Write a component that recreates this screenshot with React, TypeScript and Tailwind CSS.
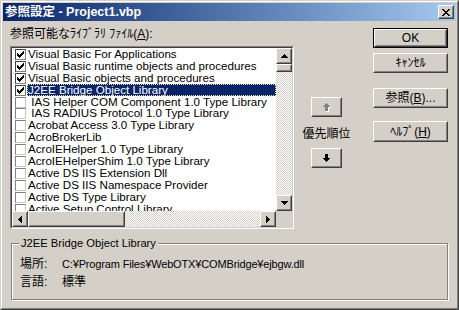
import React from "react";

type P = { className?: string; children?: React.ReactNode };

function Raised({ className = "", children }: P) {
  return (
    <div
      className={`shrink-0 border border-t-white border-l-white border-r-[#404040] border-b-[#404040] ${className}`}
    >
      <div className="w-full h-full border border-t-[#d4d0c8] border-l-[#d4d0c8] border-r-[#808080] border-b-[#808080] bg-[#d4d0c8] flex items-center justify-center">
        {children}
      </div>
    </div>
  );
}

function Btn({ children, def = false, className = "" }: P & { def?: boolean }) {
  if (def)
    return (
      <div className={`shrink-0 border border-black ${className}`}>
        <Raised className="w-full h-full">{children}</Raised>
      </div>
    );
  return <Raised className={className}>{children}</Raised>;
}

function Px({ w, h, rects, color }: { w: number; h: number; rects: number[][]; color: string }) {
  return (
    <svg width={w} height={h} viewBox={`0 0 ${w} ${h}`} shapeRendering="crispEdges" className="block">
      {rects.map(([x, y, rw, rh], i) => (
        <rect key={i} x={x} y={y} width={rw} height={rh} fill={color} />
      ))}
    </svg>
  );
}

const UP = [[3, 0, 1, 1], [2, 1, 3, 1], [1, 2, 5, 1], [0, 3, 7, 1]];
const DOWN = [[0, 0, 7, 1], [1, 1, 5, 1], [2, 2, 3, 1], [3, 3, 1, 1]];
const LEFT = [[0, 3, 1, 1], [1, 2, 1, 3], [2, 1, 1, 5], [3, 0, 1, 7]];
const RIGHT = [[0, 0, 1, 7], [1, 1, 1, 5], [2, 2, 1, 3], [3, 3, 1, 1]];
const CHECK = [[6, 0, 1, 1], [5, 1, 2, 1], [0, 2, 1, 1], [4, 2, 3, 1], [0, 3, 2, 1], [3, 3, 3, 1], [0, 4, 5, 1], [1, 5, 3, 1], [2, 6, 1, 1]];
const CLOSE = [[0, 0, 2, 1], [6, 0, 2, 1], [1, 1, 2, 1], [5, 1, 2, 1], [2, 2, 4, 1], [3, 3, 2, 1], [2, 4, 4, 1], [1, 5, 2, 1], [5, 5, 2, 1], [0, 6, 2, 1], [6, 6, 2, 1]];
const BIGDOWN = [[2, 0, 3, 4], [0, 4, 7, 1], [1, 5, 5, 1], [2, 6, 3, 1], [3, 7, 1, 1]];
const BIGUP = [[3, 0, 1, 1], [2, 1, 3, 1], [1, 2, 5, 1], [0, 3, 7, 1], [2, 4, 3, 4]];

const items: { t: string; c?: boolean; s?: boolean }[] = [
  { t: "Visual Basic For Applications", c: true },
  { t: "Visual Basic runtime objects and procedures", c: true },
  { t: "Visual Basic objects and procedures", c: true },
  { t: "J2EE Bridge Object Library", c: true, s: true },
  { t: " IAS Helper COM Component 1.0 Type Library" },
  { t: " IAS RADIUS Protocol 1.0 Type Library" },
  { t: "Acrobat Access 3.0 Type Library" },
  { t: "AcroBrokerLib" },
  { t: "AcroIEHelper 1.0 Type Library" },
  { t: "AcroIEHelperShim 1.0 Type Library" },
  { t: "Active DS IIS Extension Dll" },
  { t: "Active DS IIS Namespace Provider" },
  { t: "Active DS Type Library" },
  { t: "Active Setup Control Library" },
  { t: "ActiveMovie control type library" },
];

function CheckBox({ checked }: { checked?: boolean }) {
  return (
    <div
      className={`shrink-0 mt-[1px] w-[11px] h-[11px] bg-white border flex items-center justify-center ${
        checked
          ? "border-t-[#404040] border-l-[#404040] border-r-[#808080] border-b-[#808080]"
          : "border-t-[#808080] border-l-[#808080] border-r-[#c8c8c8] border-b-[#c8c8c8]"
      }`}
    >
      {checked && <Px w={7} h={7} rects={CHECK} color="#000" />}
    </div>
  );
}

export default function App() {
  return (
    <div className="w-[459px] h-[310px] bg-[#d4d0c8] border border-t-[#d4d0c8] border-l-[#d4d0c8] border-r-[#404040] border-b-[#404040] font-['Liberation_Sans','Noto_Sans_CJK_JP',sans-serif] text-[11.6px] text-black">
      <div className="w-full h-full border border-t-white border-l-white border-r-[#808080] border-b-[#808080] p-px flex flex-col">
        {/* title bar */}
        <div className="h-[18px] shrink-0 flex items-center bg-linear-to-r from-[#0a246a] to-[#a6caf0] pl-[2px] pr-[2px]">
          <span className="text-white font-bold text-[12.5px] leading-none whitespace-pre">参照設定 - Project1.vbp</span>
          <Raised className="ml-auto w-[16px] h-[14px]">
            <Px w={8} h={7} rects={CLOSE} color="#000" />
          </Raised>
        </div>

        {/* body */}
        <div className="flex-1 flex flex-col">
          <div className="flex shrink-0">
            {/* left column */}
            <div className="ml-[7px] w-[284px] flex flex-col">
              <div className="mt-[6px] h-[14px] leading-[14px] whitespace-pre text-[12px]">
                参照可能なﾗｲﾌﾞﾗﾘ ﾌｧｲﾙ(<u>A</u>):
              </div>
              <div className="mt-[5px] h-[183px] border border-t-[#808080] border-l-[#808080] border-r-white border-b-white">
                <div className="w-full h-full border border-t-[#404040] border-l-[#404040] border-r-[#d4d0c8] border-b-[#d4d0c8] flex flex-col bg-white">
                  <div className="flex h-[163px]">
                    <div className="w-[264px] h-[163px] overflow-hidden flex flex-col">
                      {items.map((it, i) => (
                        <div key={i} className="flex h-[11.9px] shrink-0 items-start pl-[3px]">
                          <CheckBox checked={it.c} />
                          <div
                            className={`ml-[1px] flex-1 h-[11.9px] pl-[1px] whitespace-pre leading-[11.9px] ${
                              it.s
                                ? "bg-[#0a246a] text-white outline-1 outline-dotted outline-[#f5db95] -outline-offset-1"
                                : ""
                            }`}
                          >
                            {it.t}
                          </div>
                        </div>
                      ))}
                    </div>
                    {/* vertical scrollbar */}
                    <div className="w-[16px] flex flex-col">
                      <Raised className="w-[16px] h-[16px]">
                        <Px w={7} h={4} rects={UP} color="#000" />
                      </Raised>
                      <Raised className="w-[16px] h-[8px]" />
                      <div className="flex-1 bg-[repeating-conic-gradient(#ffffff_0_25%,#d4d0c8_0_50%)] bg-[length:2px_2px]" />
                      <Raised className="w-[16px] h-[16px]">
                        <Px w={7} h={4} rects={DOWN} color="#000" />
                      </Raised>
                    </div>
                  </div>
                  <div className="flex h-[16px]">
                    <div className="w-[264px] flex">
                      <Raised className="w-[16px] h-[16px]">
                        <Px w={4} h={7} rects={LEFT} color="#000" />
                      </Raised>
                      <Raised className="w-[97px] h-[16px]" />
                      <div className="flex-1 bg-[repeating-conic-gradient(#ffffff_0_25%,#d4d0c8_0_50%)] bg-[length:2px_2px]" />
                      <Raised className="w-[16px] h-[16px]">
                        <Px w={4} h={7} rects={RIGHT} color="#000" />
                      </Raised>
                    </div>
                    <div className="w-[16px] h-[16px] bg-[#d4d0c8]" />
                  </div>
                </div>
              </div>
            </div>

            {/* middle column */}
            <div className="ml-[17px] w-[31px] flex flex-col items-center">
              <Btn className="mt-[76px] w-[31px] h-[20px]">
                <div className="relative w-[8px] h-[9px]">
                  <div className="absolute left-[1px] top-[1px]">
                    <Px w={7} h={8} rects={BIGUP} color="#ffffff" />
                  </div>
                  <div className="absolute left-0 top-0">
                    <Px w={7} h={8} rects={BIGUP} color="#808080" />
                  </div>
                </div>
              </Btn>
              <div className="mt-[10px] h-[14px] leading-[14px] whitespace-nowrap text-[12px]">優先順位</div>
              <Btn className="mt-[7px] w-[31px] h-[20px]">
                <Px w={7} h={8} rects={BIGDOWN} color="#000" />
              </Btn>
            </div>

            {/* right column */}
            <div className="ml-[31px] w-[75px] flex flex-col text-[12px]">
              <Btn def className="mt-[7px] w-[75px] h-[20px]">
                <span className="leading-none">OK</span>
              </Btn>
              <Btn className="mt-[5px] w-[75px] h-[20px]">
                <span className="leading-none">ｷｬﾝｾﾙ</span>
              </Btn>
              <Btn className="mt-[15px] w-[75px] h-[20px]">
                <span className="leading-none whitespace-pre">
                  参照(<u>B</u>)...
                </span>
              </Btn>
              <Btn className="mt-[13px] w-[75px] h-[21px]">
                <span className="leading-none whitespace-pre">
                  ﾍﾙﾌﾟ(<u>H</u>)
                </span>
              </Btn>
            </div>
          </div>

          {/* group box */}
          <div className="relative ml-[8px] mt-[14px] w-[437px] h-[57px] border border-[#808080] shadow-[inset_1px_1px_0_#ffffff,1px_1px_0_#ffffff] pt-[13px] pl-[8px] flex flex-col gap-[4px]">
            <div className="absolute -top-[8px] left-[7px] px-[2px] bg-[#d4d0c8] leading-[14px] whitespace-pre text-[11.2px]">
              J2EE Bridge Object Library
            </div>
            <div className="flex h-[14px] leading-[14px]">
              <div className="w-[42px] text-[12px]">場所:</div>
              <div className="whitespace-pre text-[11px] tracking-[-0.15px]">C:¥Program Files¥WebOTX¥COMBridge¥ejbgw.dll</div>
            </div>
            <div className="flex h-[14px] leading-[14px] text-[12px]">
              <div className="w-[42px]">言語:</div>
              <div>標準</div>
            </div>
          </div>
        </div>
      </div>
    </div>
  );
}
